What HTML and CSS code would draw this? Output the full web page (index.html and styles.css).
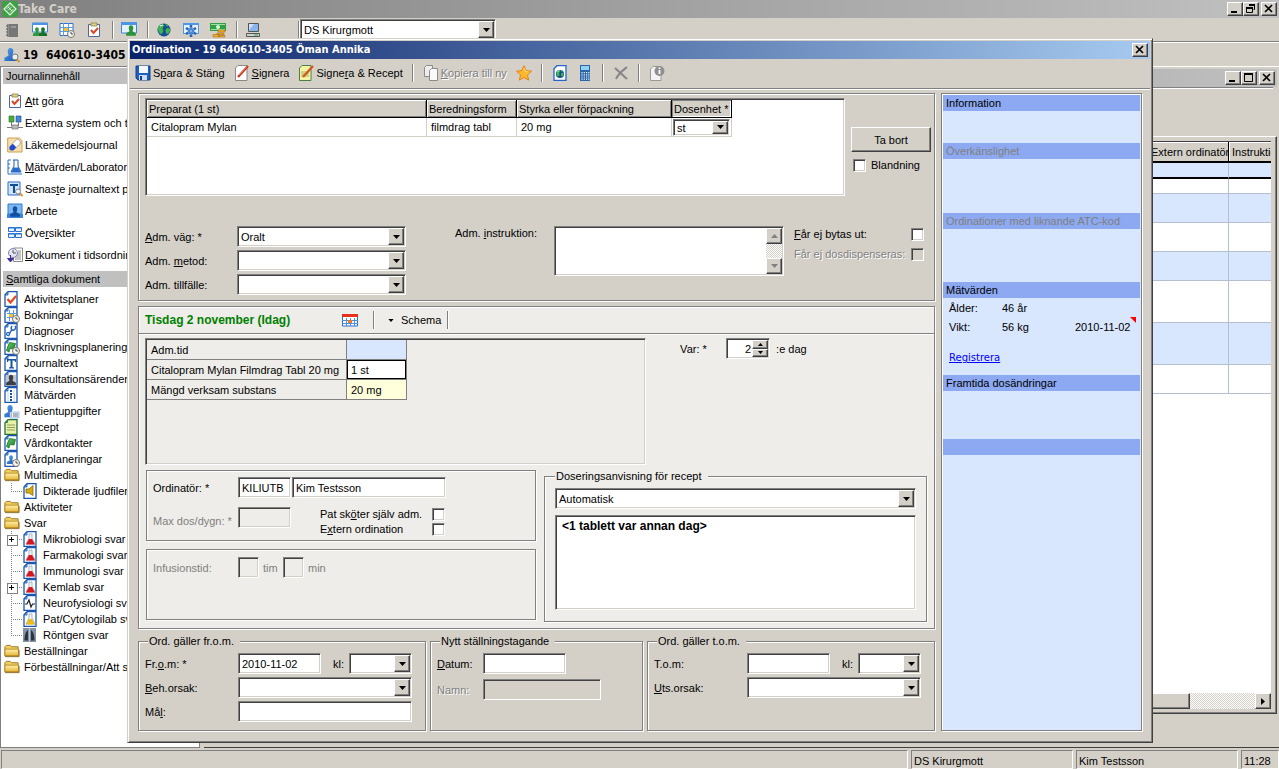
FILE: index.html
```html
<!DOCTYPE html>
<html lang="sv">
<head>
<meta charset="utf-8">
<title>Take Care</title>
<link rel="stylesheet" href="styles.css">
</head>
<body>
<svg class="sprite" aria-hidden="true">
  <defs>
    <linearGradient id="gold" x1="0" y1="0" x2="0" y2="1"><stop offset="0" stop-color="#fff3b0"/><stop offset="1" stop-color="#e8b434"/></linearGradient>
    <linearGradient id="sky" x1="0" y1="0" x2="1" y2="1"><stop offset="0" stop-color="#5aa4ee"/><stop offset="1" stop-color="#1554b8"/></linearGradient>
    <linearGradient id="leaf" x1="0" y1="0" x2="1" y2="1"><stop offset="0" stop-color="#6cc96a"/><stop offset="1" stop-color="#157a22"/></linearGradient>
  </defs>
  <symbol id="logo" viewBox="0 0 16 16"><rect width="16" height="16" rx="2" fill="#3f9f45"/><path d="M8 2l6 6-6 6-6-6z" fill="none" stroke="#e4f5e4" stroke-width="1.2"/><path d="M4.500 8L8 4.500M6 9.500L9.500 6M8 11.500L11.500 8M6 6l4 4" stroke="#e4f5e4" stroke-width="1" fill="none"/></symbol>
  <symbol id="person" viewBox="0 0 16 16"><path d="M8 1c2 0 3 1.500 3 3.500S10 8 10 9l4.500 2.500V15h-13v-3.500L6 9c0-1-1-2.500-1-4.500S6 1 8 1z"/></symbol>
  <symbol id="mini-clock" viewBox="0 0 8 8"><circle cx="4" cy="4" r="3.500" fill="#f4f4f0" stroke="#77746c"/><path d="M4 2v2h2" fill="none" stroke="#444" stroke-width=".9"/></symbol>
  <symbol id="page" viewBox="0 0 14 16"><path d="M4 .7h9v14.600H1V3.700z" fill="#fff" stroke="#1b56b0" stroke-width="1.300"/><path d="M1 4h3V1z" fill="#6fb0f2" stroke="#1b56b0" stroke-width=".8"/></symbol>
  <symbol id="book" viewBox="0 0 16 16"><path d="M2 2h11v13H2z" fill="#777"/><path d="M3 2v13" stroke="#a5a5a5"/><path d="M6 4h5v2H6z" fill="#999"/><path d="M1 4h2M1 7h2M1 10h2M1 13h2" stroke="#555"/></symbol>
  <symbol id="people" viewBox="0 0 16 16"><path d="M.5 1h15v9H.5z" fill="#fff" stroke="#3b85dc"/><path d="M0 1h16v2H0z" fill="#4b94e8"/><use href="#person" x="0" y="3" width="10" height="13" fill="#2f9a3c"/><use href="#person" x="6" y="3" width="10" height="13" fill="#187028"/></symbol>
  <symbol id="cal-clock" viewBox="0 0 16 16"><path d="M1 1.500h13v12H1z" fill="#fff" stroke="#2f72cc"/><path d="M4.500 1v13M9.500 1v13M1 5.500h13M1 9.500h13" stroke="#5b9be6" fill="none"/><path d="M5 6h4v3H5z" fill="#f5c22c"/><use href="#mini-clock" x="8" y="8" width="8" height="8"/></symbol>
  <symbol id="clip" viewBox="0 0 16 16"><path d="M2.500 2.500h11v12h-11z" fill="#fff" stroke="#4c66a8"/><path d="M5 1h6v3H5z" fill="#ddd28a" stroke="#8f8344" stroke-width=".8"/><path d="M5 8l2.500 3L12 6" fill="none" stroke="#d84a2a" stroke-width="2"/></symbol>
  <symbol id="person-green" viewBox="0 0 16 16"><path d="M.5 1h15v10H.5z" fill="#e6f1ff" stroke="#3b85dc"/><path d="M0 0h16v3H0z" fill="#4b94e8"/><use href="#person" x="4" y="1" width="12" height="15" fill="#2c9238"/></symbol>
  <symbol id="globe" viewBox="0 0 16 16"><circle cx="8" cy="8" r="6.500" fill="#164f94"/><path d="M4 3c3-2 5 0 4 1S6 7 7 8s-1 4-2 4S2 9 2 7s1-3 2-4zM10 7c2-2 4-1 4 1s-2 4-3 4-2-4-1-5zM9 2l3 1-1 2z" fill="#42b64b"/><path d="M4 4l3-1" stroke="#dff" /></symbol>
  <symbol id="snow" viewBox="0 0 16 16"><path d="M0 1h16v11H0z" fill="#4f95e8"/><path d="M1 3h14v8H1z" fill="#e7f2ff"/><path d="M8 3v12M3 6l10 6M13 6L3 12" stroke="#2465b8" stroke-width="2.600"/><path d="M8 5v8M5 7l6 4M11 7l-6 4" stroke="#8ec2fa" stroke-width=".8"/></symbol>
  <symbol id="money" viewBox="0 0 16 16"><path d="M0 1h16v8H0z" fill="#2fa045"/><path d="M1 2h14v1H1zM1 7h14v1H1z" fill="#9be0a0"/><circle cx="8" cy="5" r="2" fill="#d8f6d8"/><path d="M8 8h7v2H8zM7 11h7v1.500H7zM3 12.500h6V15H3zM9 13.500h6V15H9z" fill="#f1b428" stroke="#a8660f" stroke-width=".6"/></symbol>
  <symbol id="pc" viewBox="0 0 16 16"><path d="M3.500 1.500h10v8h-10z" fill="#8ab4ec" stroke="#555"/><path d="M4 2h5L4 8z" fill="#cfe2fb"/><path d="M1.500 11.500h13v3h-13z" fill="#d0d0cc" stroke="#555"/><path d="M9 13h4" stroke="#2a6"/></symbol>
  <symbol id="user-search" viewBox="0 0 16 16"><use href="#person" x="-1" y="0" width="15" height="15" fill="url(#sky)"/><circle cx="11" cy="10" r="3" fill="#e4f2ff" stroke="#777"/><path d="M13 12.500l2.500 2.500" stroke="#d89628" stroke-width="1.800"/></symbol>
  <symbol id="external" viewBox="0 0 16 16"><path d="M2 1h5v6H2z" fill="#4aac3c" stroke="#22701e" stroke-width=".6"/><path d="M9 1h5v6H9z" fill="#4b88dc" stroke="#1a448c" stroke-width=".6"/><path d="M4.500 7v4M11.500 7v4M0 12.500h16" stroke="#777" fill="none"/><path d="M5 10h6v4H5z" fill="#bbb" stroke="#666" stroke-width=".6"/></symbol>
  <symbol id="pill" viewBox="0 0 16 16"><path d="M.7 1h11.600L15 3.700V15H.7z" fill="#f6deae" stroke="#caa050"/><path d="M5 11L10.500 5.500" stroke="#8a8a9a" stroke-width="6" stroke-linecap="round"/><path d="M5 11L10.500 5.500" stroke="#fff" stroke-width="5" stroke-linecap="round"/><path d="M5 11L7.500 8.500" stroke="#1e49c8" stroke-width="5"/><circle cx="5" cy="11" r="2.500" fill="#1e49c8"/></symbol>
  <symbol id="flask-rule" viewBox="0 0 16 16"><path d="M1 1h3M1 1v14h14M1 5h2M1 9h2" stroke="#2a6ccc" fill="none"/><path d="M6 1h5M7 1v6l-3 6h10l-3-6V1" fill="#fff" stroke="#1d5cb4"/><path d="M6.500 8.500h5l2 4.500h-9z" fill="#246ccc"/></symbol>
  <symbol id="text-search" viewBox="0 0 16 16"><path d="M1 1h12v13H1z" fill="#cfe6fb" stroke="#2a6ccc"/><path d="M3 3h8v2H8v7H6V5H3z" fill="#124c94"/><circle cx="11" cy="10.500" r="2.500" fill="#eef6ff" stroke="#888"/><path d="M13 12.500l2.500 2.500" stroke="#d89628" stroke-width="2"/></symbol>
  <symbol id="work" viewBox="0 0 16 16"><path d="M1 1h14v10H1z" fill="#7db7f3" stroke="#2f78cf"/><path d="M0 11h16v4H0z" fill="#3c86de"/><use href="#person" x="2" y="1" width="12" height="15" fill="#124f9e"/></symbol>
  <symbol id="tiles" viewBox="0 0 16 16"><path d="M1.500 2.500h6v4h-6zM8.500 2.500h6v4h-6zM1.500 8.500h6v4h-6zM8.500 8.500h6v4h-6z" fill="#eaf4ff" stroke="#2a73cf"/><path d="M1 3h13M1 9h13" stroke="#2a73cf"/></symbol>
  <symbol id="time-doc" viewBox="0 0 16 16"><path d="M6.500 1h9v13.500h-9z" fill="#fff" stroke="#888"/><path d="M11 4h3M11 6h3M10 8h4M8 10h6M8 12h6" stroke="#888"/><circle cx="6" cy="6" r="4.500" fill="#e2e5f2" stroke="#8585a8"/><path d="M6 3v3h3" stroke="#555" fill="none"/><path d="M3.500 8v4M.5 11.500L3.500 15l3-3.500z" fill="#3b2f9e" stroke="#3b2f9e"/></symbol>
  <symbol id="d-check" viewBox="0 0 16 16"><use href="#page" width="14" height="16"/><path d="M3.500 8l3 3.500L12 5" stroke="#e04a20" stroke-width="2.200" fill="none"/></symbol>
  <symbol id="d-cal" viewBox="0 0 16 16"><use href="#page" width="14" height="16"/><path d="M5.500 3v11M9.500 3v11M3 6.500h10M3 10.500h8" stroke="#5b9be6" fill="none"/><path d="M5 7h4v3H5z" fill="#f5c22c"/><use href="#mini-clock" x="8" y="8" width="8" height="8"/></symbol>
  <symbol id="d-steth" viewBox="0 0 16 16"><use href="#page" width="14" height="16"/><path d="M8 3c-2 3 0 5 2 4s2-3 1-4M8 7c-2 1-2 4-4 6" stroke="#2765bd" stroke-width="1.500" fill="none"/><circle cx="4" cy="11" r="1.700" fill="#9cc8f4" stroke="#2765bd"/></symbol>
  <symbol id="d-green" viewBox="0 0 16 16"><use href="#page" width="14" height="16"/><path d="M5.500 3.500l6 1-1.500 5.500-4-.5L5 13l-2.500-1.500L4 7z" fill="url(#leaf)" stroke="#157a22" stroke-width=".8"/></symbol>
  <symbol id="d-green-clock" viewBox="0 0 16 16"><use href="#d-green" width="16" height="16"/><use href="#mini-clock" x="8" y="8" width="8" height="8"/></symbol>
  <symbol id="d-text" viewBox="0 0 16 16"><use href="#page" width="14" height="16"/><path d="M3 4h9v3h-1l-.5-1.500H8.500V12l1.500.5v1H5v-1l1.500-.5V5.500H4.500L4 7H3z" fill="#17569c"/></symbol>
  <symbol id="d-consult" viewBox="0 0 16 16"><use href="#page" width="14" height="16"/><path d="M2 4h10v11H2z" fill="#c3c8d0"/><use href="#person" x="1" y="3" width="12" height="12" fill="#3a3f48"/></symbol>
  <symbol id="d-measure" viewBox="0 0 16 16"><use href="#page" width="14" height="16"/><path d="M4 5v9M10 3v11" stroke="#b7d6f7"/><path d="M7 3v12" stroke="#1d4f9c" stroke-width="2" stroke-dasharray="2 1"/></symbol>
  <symbol id="d-patient" viewBox="0 0 16 16"><use href="#person" x="-1" y="0" width="14" height="16" fill="url(#sky)"/><path d="M6 9h9v6H6z" fill="#eef5ff" stroke="#7aa8dc" stroke-width=".7"/><path d="M7 11h1M9 11h5M7 13h1M9 13h5" stroke="#777"/></symbol>
  <symbol id="d-recept" viewBox="0 0 16 16"><path d="M4 .7h9v14.600H1V3.700z" fill="#e9f0a8" stroke="#22703a" stroke-width="1.300"/><path d="M3 6h8M3 8.500h8M3 11h8" stroke="#8ea05c"/><path d="M1 4h3V1z" fill="#3f8d4a"/></symbol>
  <symbol id="d-plan" viewBox="0 0 16 16"><use href="#page" width="14" height="16"/><use href="#person" x="2" y="2" width="10" height="13" fill="url(#sky)"/><use href="#mini-clock" x="8" y="8" width="8" height="8"/></symbol>
  <symbol id="folder" viewBox="0 0 17 16"><path d="M1 3.500L2.500 2h4L8 3.500h7V13H1z" fill="#f3cf62" stroke="#9a741c"/><path d="M1 13V6h14.500v7z" fill="url(#gold)" stroke="#b88a22"/><path d="M1 14h15V7" stroke="#8a6a22" fill="none"/></symbol>
  <symbol id="d-sound" viewBox="0 0 14 16"><use href="#page" width="14" height="16"/><path d="M3 6h3l4-3.500v10L6 10H3z" fill="#d4ad12" stroke="#8a6d00" stroke-width=".8"/></symbol>
  <symbol id="d-red" viewBox="0 0 14 16"><use href="#page" width="14" height="16"/><path d="M6 3h3v4l3 6H3l3-6z" fill="#eef4fb" stroke="#8a9ab0" stroke-width=".7"/><path d="M6 8h3l3 5.500H3z" fill="#d8171c"/></symbol>
  <symbol id="d-yellow" viewBox="0 0 14 16"><use href="#page" width="14" height="16"/><path d="M6 3h3v4l3 6H3l3-6z" fill="#eef4fb" stroke="#8a9ab0" stroke-width=".7"/><path d="M6 8h3l3 5.500H3z" fill="#eebc10"/></symbol>
  <symbol id="d-pulse" viewBox="0 0 14 16"><use href="#page" width="14" height="16"/><path d="M2 9h2l2-4 2 7 1.500-3H12" fill="none" stroke="#222" stroke-width="1.200"/></symbol>
  <symbol id="d-xray" viewBox="0 0 14 16"><path d="M0 1h13v14H0z" fill="#8494a4"/><path d="M5 3c-3 2-3.500 7-3.500 10.500H5zM8 3c3 2 3.500 7 3.500 10.500H8z" fill="#2a3440"/><path d="M6.500 1v14" stroke="#b9c7d4"/></symbol>
  <symbol id="save" viewBox="0 0 16 16"><path d="M1 1h14v14H3l-2-2z" fill="#1f5ec2" stroke="#123f8e"/><path d="M4 1h9v7H4z" fill="#f2f6fc"/><path d="M4 10h8v5H4z" fill="#cddcf0"/><path d="M5 11h2v4H5z" fill="#123f8e"/></symbol>
  <symbol id="sign" viewBox="0 0 16 16"><path d="M4 .5h9v15H1.500V3z" fill="#fff" stroke="#888"/><path d="M4 12L14 1" stroke="#c9321c" stroke-width="2.200"/><path d="M5 10L13 1.500" stroke="#f58a70" stroke-width=".8"/></symbol>
  <symbol id="sign-recept" viewBox="0 0 16 16"><path d="M4 .5h9v15H1.500V3z" fill="#f2f5a6" stroke="#4a8044"/><path d="M3 7h8M3 9h8M3 11h8" stroke="#a5ae68"/><path d="M5 12L15 1" stroke="#d4541c" stroke-width="2.200"/></symbol>
  <symbol id="copy" viewBox="0 0 16 16"><path d="M3.500.5h6v11h-8v-9z" fill="#eee" stroke="#8b8b8b"/><path d="M8.500 3.500h6v12h-8v-10z" fill="#fafafa" stroke="#8b8b8b"/></symbol>
  <symbol id="star" viewBox="0 0 16 16"><path d="M8 .8l2.200 4.800 5.300.6-4 3.600 1.100 5.400L8 12.500l-4.600 2.700 1.100-5.400-4-3.600 5.300-.6z" fill="#ffb82c" stroke="#e08416"/><path d="M8 3l1.500 3.500 3 .5" stroke="#ffe48c" fill="none"/></symbol>
  <symbol id="web-doc" viewBox="0 0 16 16"><path d="M5 .7h9v14.600H2V3.700z" fill="#fff" stroke="#2467cc" stroke-width="1.300"/><use href="#globe" x="3" y="4" width="10" height="10"/></symbol>
  <symbol id="calc" viewBox="0 0 16 16"><path d="M3 0h10v16H3z" fill="#2b66a8"/><path d="M4 1h8v4H4z" fill="#8fd0f4"/><path d="M5 7v8M7.300 7v8M9.600 7v8M11.800 7v8" stroke="#e8f4ff" stroke-width="1.200" stroke-dasharray="1.200 1"/></symbol>
  <symbol id="cross" viewBox="0 0 16 16"><path d="M2 3l12 11M14 2C9 6 5 9 3 14" stroke="#858585" stroke-width="2" fill="none"/></symbol>
  <symbol id="info-doc" viewBox="0 0 16 16"><path d="M4 1.500h8v14H1.500V4z" fill="#f3f3f3" stroke="#999"/><circle cx="10.500" cy="6" r="5" fill="#8f8f8f"/><path d="M10.500 2.500v1.500M10.500 5v4" stroke="#fff" stroke-width="1.800"/></symbol>
  <symbol id="calendar" viewBox="0 0 16 13"><path d="M.5 1h15v11H.5z" fill="#fff" stroke="#2b6fcc"/><path d="M0 0h16v3H0z" fill="#e8301c"/><path d="M4.500 4v8M8.500 4v8M12.500 4v8M0 6.500h16M0 9.500h16" stroke="#4c8ee0" fill="none"/><path d="M6 6h4v3H6z" fill="#ee7b24"/></symbol>
  <symbol id="down" viewBox="0 0 7 4"><path d="M0 0h7L3.500 4z"/></symbol>
  <symbol id="up" viewBox="0 0 7 4"><path d="M0 4h7L3.500 0z"/></symbol>
  <symbol id="right" viewBox="0 0 4 7"><path d="M0 0v7l4-3.500z"/></symbol>
  <symbol id="w-min" viewBox="0 0 10 10"><path d="M1 7h6v2H1z"/></symbol>
  <symbol id="w-max" viewBox="0 0 10 10"><path d="M.5 1.500h8v7h-8z" fill="none" stroke="#000"/><path d="M0 0h9v2H0z"/></symbol>
  <symbol id="w-restore" viewBox="0 0 10 10"><path d="M3.500 1.500h5v4h-1M.5 4.500h6v4h-6z" fill="none" stroke="#000"/><path d="M3 0h6v2H3zM0 3h7v2H0z"/></symbol>
  <symbol id="w-close" viewBox="0 0 10 10"><path d="M1 1l7 7M8 1L1 8" stroke="#000" stroke-width="1.700"/></symbol>
</svg>

<div class="app">
  <header class="titlebar titlebar-app">
    <svg class="i16"><use href="#logo"/></svg>
    <span class="caption">Take Care</span>
    <button class="winbtn" aria-label="Minimera"><svg><use href="#w-min"/></svg></button>
    <button class="winbtn" aria-label="Återställ"><svg><use href="#w-restore"/></svg></button>
    <button class="winbtn winbtn-close" aria-label="Stäng"><svg><use href="#w-close"/></svg></button>
  </header>

  <div class="app-tools">
    <button class="icon-tool" aria-label="Journal"><svg class="i16"><use href="#book"/></svg></button>
    <button class="icon-tool" aria-label="Patienter"><svg class="i16"><use href="#people"/></svg></button>
    <button class="icon-tool" aria-label="Bokning"><svg class="i16"><use href="#cal-clock"/></svg></button>
    <button class="icon-tool" aria-label="Att göra"><svg class="i16"><use href="#clip"/></svg></button>
    <i class="sep"></i>
    <button class="icon-tool" aria-label="Patient"><svg class="i16"><use href="#person-green"/></svg></button>
    <i class="sep"></i>
    <button class="icon-tool" aria-label="Webb"><svg class="i16"><use href="#globe"/></svg></button>
    <button class="icon-tool" aria-label="Akut"><svg class="i16"><use href="#snow"/></svg></button>
    <button class="icon-tool" aria-label="Kassa"><svg class="i16"><use href="#money"/></svg></button>
    <i class="sep"></i>
    <button class="icon-tool" aria-label="Dator"><svg class="i16"><use href="#pc"/></svg></button>
    <i class="sep sep-far"></i>
    <span class="combo combo-unit"><select aria-label="Enhet"><option>DS Kirurgmott</option></select><span class="drop"><svg class="tri"><use href="#down"/></svg></span></span>
  </div>

  <div class="patient"><svg class="i16"><use href="#user-search"/></svg><span>19</span><span>640610-3405 Öman Annika</span></div>

  <div class="work-area">
    <nav class="sidebar">
      <h2>Journalinnehåll</h2>
      <ul class="links">
        <li><svg class="i16"><use href="#clip"/></svg><a href="#"><u>A</u>tt göra</a></li>
        <li><svg class="i16"><use href="#external"/></svg><a href="#">Externa system och tjänster</a></li>
        <li><svg class="i16"><use href="#pill"/></svg><a href="#">Läkemedels<u>j</u>ournal</a></li>
        <li><svg class="i16"><use href="#flask-rule"/></svg><a href="#"><u>M</u>ätvärden/Laboratorium</a></li>
        <li><svg class="i16"><use href="#text-search"/></svg><a href="#">Senas<u>t</u>e journaltext per</a></li>
        <li><svg class="i16"><use href="#work"/></svg><a href="#">Arbete</a></li>
        <li><svg class="i16"><use href="#tiles"/></svg><a href="#">Öve<u>r</u>sikter</a></li>
        <li><svg class="i16"><use href="#time-doc"/></svg><a href="#"><u>D</u>okument i tidsordning</a></li>
      </ul>
      <h2><u>S</u>amtliga dokument</h2>
      <ul class="tree">
        <li><svg class="i16"><use href="#d-check"/></svg>Aktivitetsplaner</li>
        <li><svg class="i16"><use href="#d-cal"/></svg>Bokningar</li>
        <li><svg class="i16"><use href="#d-steth"/></svg>Diagnoser</li>
        <li><svg class="i16"><use href="#d-green-clock"/></svg>Inskrivningsplaneringar</li>
        <li><svg class="i16"><use href="#d-text"/></svg>Journaltext</li>
        <li><svg class="i16"><use href="#d-consult"/></svg>Konsultationsärenden</li>
        <li><svg class="i16"><use href="#d-measure"/></svg>Mätvärden</li>
        <li><svg class="i16"><use href="#d-patient"/></svg>Patientuppgifter</li>
        <li><svg class="i16"><use href="#d-recept"/></svg>Recept</li>
        <li><svg class="i16"><use href="#d-green"/></svg>Vårdkontakter</li>
        <li><svg class="i16"><use href="#d-plan"/></svg>Vårdplaneringar</li>
        <li><svg class="i16"><use href="#folder"/></svg>Multimedia</li>
        <li class="sub last"><i class="twig"></i><svg class="i14"><use href="#d-sound"/></svg>Dikterade ljudfiler</li>
        <li><svg class="i16"><use href="#folder"/></svg>Aktiviteter</li>
        <li><svg class="i16"><use href="#folder"/></svg>Svar</li>
        <li class="sub plus"><i class="twig"></i><svg class="i14"><use href="#d-red"/></svg>Mikrobiologi svar</li>
        <li class="sub"><i class="twig"></i><svg class="i14"><use href="#d-red"/></svg>Farmakologi svar</li>
        <li class="sub"><i class="twig"></i><svg class="i14"><use href="#d-red"/></svg>Immunologi svar</li>
        <li class="sub plus"><i class="twig"></i><svg class="i14"><use href="#d-red"/></svg>Kemlab svar</li>
        <li class="sub"><i class="twig"></i><svg class="i14"><use href="#d-pulse"/></svg>Neurofysiologi svar</li>
        <li class="sub"><i class="twig"></i><svg class="i14"><use href="#d-yellow"/></svg>Pat/Cytologilab svar</li>
        <li class="sub last"><i class="twig"></i><svg class="i14"><use href="#d-xray"/></svg>Röntgen svar</li>
        <li><svg class="i16"><use href="#folder"/></svg>Beställningar</li>
        <li><svg class="i16"><use href="#folder"/></svg>Förbeställningar/Att skriva</li>
      </ul>
    </nav>

    <main class="child">
      <div class="titlebar titlebar-child">
        <span class="caption"></span>
        <button class="winbtn" aria-label="Minimera"><svg><use href="#w-min"/></svg></button>
        <button class="winbtn" aria-label="Maximera"><svg><use href="#w-max"/></svg></button>
        <button class="winbtn winbtn-close" aria-label="Stäng"><svg><use href="#w-close"/></svg></button>
      </div>
      <div class="child-rule"></div>
      <div class="list-frame">
        <div class="list-scroll">
          <table class="list">
            <colgroup><col><col class="c-extern"><col class="c-instr"></colgroup>
            <thead><tr><th></th><th>Extern ordinatör</th><th>Instruktion</th></tr></thead>
            <tbody>
              <tr class="current"><td></td><td></td><td></td></tr>
              <tr class="r15"><td></td><td></td><td></td></tr>
              <tr class="r29 alt"><td></td><td></td><td></td></tr>
              <tr class="r29"><td></td><td></td><td></td></tr>
              <tr class="r29 alt"><td></td><td></td><td></td></tr>
              <tr class="r42"><td></td><td></td><td></td></tr>
              <tr class="r42 alt"><td></td><td></td><td></td></tr>
              <tr class="r29"><td></td><td></td><td></td></tr>
            </tbody>
          </table>
        </div>
        <div class="hscroll"><span class="thumb"></span><button class="scrollbtn" aria-label="Rulla åt höger"><svg class="tri-r"><use href="#right"/></svg></button></div>
      </div>
    </main>
  </div>

  <footer class="status"><span class="st-main"></span><span class="st-cell">DS Kirurgmott</span><span class="st-cell">Kim Testsson</span><span class="st-time">11:28</span></footer>
</div>

<section class="dialog" role="dialog" aria-labelledby="dlg-title">
  <header class="titlebar titlebar-dialog">
    <span class="caption" id="dlg-title">Ordination - 19 640610-3405 Öman Annika</span>
    <button class="winbtn winbtn-close" aria-label="Stäng"><svg><use href="#w-close"/></svg></button>
  </header>

  <div class="dlg-tools">
    <button class="tool t-save"><svg class="i16"><use href="#save"/></svg><span>S<u>p</u>ara &amp; Stäng</span></button>
    <button class="tool t-sign"><svg class="i16"><use href="#sign"/></svg><span><u>S</u>ignera</span></button>
    <button class="tool t-recept"><svg class="i16"><use href="#sign-recept"/></svg><span>Signe<u>r</u>a &amp; Recept</span></button>
    <i class="sep"></i>
    <button class="tool t-copy" disabled><svg class="i16"><use href="#copy"/></svg><span><u>K</u>opiera till ny</span></button>
    <button class="tool" aria-label="Favorit"><svg class="i16"><use href="#star"/></svg></button>
    <i class="sep"></i>
    <button class="tool" aria-label="Webbinformation"><svg class="i16"><use href="#web-doc"/></svg></button>
    <button class="tool" aria-label="Kalkylator"><svg class="i16"><use href="#calc"/></svg></button>
    <i class="sep"></i>
    <button class="tool" disabled aria-label="Ta bort"><svg class="i16"><use href="#cross"/></svg></button>
    <i class="sep"></i>
    <button class="tool" disabled aria-label="Information"><svg class="i16"><use href="#info-doc"/></svg></button>
  </div>

  <div class="dlg-body">
    <div class="dlg-left">
      <div class="panel drug">
        <div class="drug-top">
          <div class="sunken drug-list">
            <table class="drugs">
              <colgroup><col class="c-prep"><col class="c-form"><col class="c-size"><col class="c-unit"></colgroup>
              <thead><tr><th>Preparat (1 st)</th><th>Beredningsform</th><th>Styrka eller förpackning</th><th class="pressed">Dosenhet *</th></tr></thead>
              <tbody><tr><td>Citalopram Mylan</td><td>filmdrag tabl</td><td>20 mg</td><td class="cell-combo"><span class="combo combo-cell"><select aria-label="Dosenhet"><option>st</option></select><span class="drop"><svg class="tri"><use href="#down"/></svg></span></span></td></tr></tbody>
            </table>
          </div>
          <div class="drug-side">
            <button class="push">Ta bort</button>
            <label class="check"><input type="checkbox">Blandning</label>
          </div>
        </div>
        <div class="drug-form">
          <div class="adm">
            <label for="vag"><u>A</u>dm. väg: *</label>
            <span class="combo"><select id="vag"><option>Oralt</option></select><span class="drop"><svg class="tri"><use href="#down"/></svg></span></span>
            <label for="metod">Adm. <u>m</u>etod:</label>
            <span class="combo"><select id="metod"><option></option></select><span class="drop"><svg class="tri"><use href="#down"/></svg></span></span>
            <label for="tillf">Adm. tillfälle:</label>
            <span class="combo"><select id="tillf"><option></option></select><span class="drop"><svg class="tri"><use href="#down"/></svg></span></span>
          </div>
          <label class="instr-label" for="instr">Adm. <u>i</u>nstruktion:</label>
          <div class="sunken instr">
            <textarea id="instr"></textarea>
            <div class="vscroll"><button class="scrollbtn" aria-label="Upp"><svg class="tri"><use href="#up"/></svg></button><button class="scrollbtn" aria-label="Ned"><svg class="tri"><use href="#down"/></svg></button></div>
          </div>
          <div class="flags">
            <label for="byt"><u>F</u>år ej bytas ut:</label><input id="byt" type="checkbox">
            <label for="dos" class="off">Får ej dosdispenseras:</label><input id="dos" type="checkbox" disabled>
          </div>
        </div>
      </div>

      <div class="panel dose">
        <div class="dose-head">
          <h3>Tisdag 2 november (Idag)</h3>
          <button class="tool" aria-label="Kalender"><svg class="cal"><use href="#calendar"/></svg></button>
          <i class="sep"></i>
          <button class="tool schema"><svg class="tri-s"><use href="#down"/></svg><span>Schema</span></button>
          <i class="sep"></i>
        </div>
        <div class="dose-main">
          <div class="sunken dose-list">
            <table class="doses">
              <tbody>
                <tr><th>Adm.tid</th><td class="time"></td></tr>
                <tr><th>Citalopram Mylan Filmdrag Tabl 20 mg</th><td class="focus">1 st</td></tr>
                <tr><th>Mängd verksam substans</th><td class="sum">20 mg</td></tr>
              </tbody>
            </table>
          </div>
          <div class="every">
            <label for="var">Var: *</label>
            <span class="sunken spin"><input id="var" type="text" value="2"><span class="spin-btns"><button aria-label="Öka"><svg><use href="#up"/></svg></button><button aria-label="Minska"><svg><use href="#down"/></svg></button></span></span>
            <span>:e dag</span>
          </div>
        </div>
        <div class="dose-foot">
          <div class="foot-left">
            <div class="panel orderer">
              <label for="ord">Ordinatör: *</label>
              <div class="names"><input class="field w-code" id="ord" type="text" value="KILIUTB"><input class="field w-name" type="text" value="Kim Testsson" aria-label="Ordinatörens namn"></div>
              <label for="max" class="grey">Max dos/dygn: *</label>
              <div class="max-row">
                <input class="field w-code" id="max" type="text" disabled>
                <div class="opts">
                  <label for="sjalv">Pat sk<u>ö</u>ter själv adm.</label><input id="sjalv" type="checkbox">
                  <label for="extern">E<u>x</u>tern ordination</label><input id="extern" type="checkbox">
                </div>
              </div>
            </div>
            <div class="panel infusion">
              <label for="tim" class="grey">Infusionstid:</label>
              <input class="field w-tiny" id="tim" type="text" disabled><span class="grey">tim</span>
              <input class="field w-tiny" type="text" disabled aria-label="Minuter"><span class="grey">min</span>
            </div>
          </div>
          <fieldset class="advice">
            <legend>Doseringsanvisning för recept</legend>
            <span class="combo"><select aria-label="Typ av anvisning"><option>Automatisk</option></select><span class="drop"><svg class="tri"><use href="#down"/></svg></span></span>
            <textarea class="field advice-text" aria-label="Doseringsanvisning">&lt;1 tablett var annan dag&gt;</textarea>
          </fieldset>
        </div>
      </div>

      <div class="periods">
        <fieldset class="period">
          <legend>Ord. gäller fr.o.m.</legend>
          <label for="from">Fr.<u>o</u>.m: *</label>
          <div class="date-row"><input class="field w-date" id="from" type="text" value="2010-11-02"><label for="fromkl">kl:</label><span class="combo w-time"><select id="fromkl"><option></option></select><span class="drop"><svg class="tri"><use href="#down"/></svg></span></span></div>
          <label for="beh"><u>B</u>eh.orsak:</label>
          <span class="combo"><select id="beh"><option></option></select><span class="drop"><svg class="tri"><use href="#down"/></svg></span></span>
          <label for="mal">Må<u>l</u>:</label>
          <input class="field" id="mal" type="text">
        </fieldset>
        <fieldset class="period period-mid">
          <legend>Nytt ställningstagande</legend>
          <label for="datum"><u>D</u>atum:</label>
          <input class="field w-date" id="datum" type="text">
          <label for="namn" class="off">Namn:</label>
          <input class="field w-sign" id="namn" type="text" disabled>
        </fieldset>
        <fieldset class="period">
          <legend>Ord. gäller t.o.m.</legend>
          <label for="tom">T.o.m:</label>
          <div class="date-row"><input class="field w-date" id="tom" type="text"><label for="tomkl">kl:</label><span class="combo w-time"><select id="tomkl"><option></option></select><span class="drop"><svg class="tri"><use href="#down"/></svg></span></span></div>
          <label for="uts"><u>U</u>ts.orsak:</label>
          <span class="combo"><select id="uts"><option></option></select><span class="drop"><svg class="tri"><use href="#down"/></svg></span></span>
        </fieldset>
      </div>
    </div>

    <aside class="info">
      <h4>Information</h4>
      <div class="info-gap g32"></div>
      <h4 class="dim">Överkänslighet</h4>
      <div class="info-gap g54"></div>
      <h4 class="dim">Ordinationer med liknande ATC-kod</h4>
      <div class="info-gap g53"></div>
      <h4>Mätvärden</h4>
      <div class="measures">
        <span>Ålder:</span><span>46 år</span><span></span>
        <span>Vikt:</span><span>56 kg</span><span class="flagged">2010-11-02<svg viewBox="0 0 6 6"><path d="M0 0h6v6z" fill="#f00"/></svg></span>
        <a href="#">Registrera</a>
      </div>
      <h4>Framtida dosändringar</h4>
      <div class="info-gap g48"></div>
      <h4></h4>
    </aside>
  </div>
</section>
</body>
</html>
```
FILE: styles.css
```css
:root {
  --face: #d4d0c8;
  --light: #eeede9;
  --shade: #808080;
  --dark: #404040;
  --sky: #d8e6fe;
  --bar: #8ca9f1;
}

* { box-sizing: border-box; }

body {
  margin: 0;
  height: 100vh;
  overflow: hidden;
  background: var(--face);
  color: #000;
  font: 11px/14px "Liberation Sans", Arial, sans-serif;
  white-space: nowrap;
}

button, input, select, textarea {
  margin: 0;
  padding: 0;
  border: 0;
  border-radius: 0;
  background: none;
  color: inherit;
  font: inherit;
  outline: 0;
}

h2, h3, h4, ul { margin: 0; padding: 0; font: inherit; list-style: none; }
a { color: inherit; text-decoration: none; }
svg { display: block; flex: none; }
.sprite { position: absolute; width: 0; height: 0; }
.i16 { width: 16px; height: 16px; }
.i14 { width: 14px; height: 16px; }
.tri { width: 7px; height: 4px; }
.tri-s { width: 6px; height: 3px; }
.tri-r { width: 4px; height: 7px; }
.cal { width: 16px; height: 13px; }

.grey { color: var(--shade); }
.off { color: var(--shade); text-shadow: 1px 1px #fff; }

.sunken, .field, .combo, input[type="checkbox"] {
  border: 1px solid;
  border-color: var(--shade) #fff #fff var(--shade);
  box-shadow: inset 1px 1px var(--dark), inset -1px -1px var(--face);
  background: #fff;
}
.sunken { padding: 1px; }
.field { height: 21px; width: 100%; padding: 0 3px; resize: none; }
.field:disabled { background: transparent; }
input[type="checkbox"] { appearance: none; display: block; width: 13px; height: 13px; }
input[type="checkbox"]:disabled { background: var(--face); }

.combo { display: flex; height: 21px; padding: 1px; }
.combo select { flex: 1; min-width: 0; padding: 0 2px; appearance: none; }
.drop, .scrollbtn, .winbtn, .push, .thumb, .spin-btns button {
  display: flex;
  align-items: center;
  justify-content: center;
  border: 1px solid;
  border-color: #fff var(--dark) var(--dark) #fff;
  box-shadow: inset -1px -1px var(--shade);
  background: var(--face);
}
.drop { flex: none; width: 16px; }
.scrollbtn { width: 16px; height: 16px; }

.sep { width: 2px; height: 18px; border-left: 1px solid var(--shade); background: #fff; }

.titlebar { display: flex; flex: none; align-items: center; height: 18px; padding: 0 2px; }
.caption { flex: 1; font: bold 11px/14px "DejaVu Sans Condensed", "DejaVu Sans", sans-serif; }
.winbtn { width: 16px; height: 14px; }
.winbtn svg { width: 10px; height: 10px; }
.winbtn-close { margin-left: 2px; }
.titlebar-app { background: linear-gradient(90deg, #808080, #c0c0c0); color: var(--face); }
.titlebar-app .caption { font-size: 12px; }
.titlebar-dialog { background: linear-gradient(90deg, #0a246a, #a6caf0); color: #fff; }

.app { display: flex; flex-direction: column; height: 100%; }
.app-tools {
  display: flex;
  flex: none;
  align-items: center;
  height: 24px;
  padding-left: 5px;
  gap: 10px;
  border-bottom: 1px solid var(--shade);
}
.app-tools .sep { margin: 0 -3px 0 -1px; }
.app-tools .sep-far { margin: 0 0 0 26px; }
.app-tools .combo-unit { width: 196px; margin-left: -10px; }
.icon-tool { width: 17px; height: 16px; }

.patient {
  display: flex;
  flex: none;
  align-items: center;
  height: 24px;
  padding-left: 4px;
  border-top: 1px solid #fff;
  font: bold 12px/14px "DejaVu Sans Condensed", "DejaVu Sans", sans-serif;
}
.patient span { margin-left: 3px; }
.patient span + span { margin-left: 8px; }

.work-area { display: flex; flex: 1; min-height: 0; gap: 4px; }
.sidebar {
  flex: none;
  width: 200px;
  padding: 1px 1px 0 2px;
  overflow: hidden;
  border: 1px solid var(--shade);
  background: #fff;
}
.sidebar h2 { height: 16px; padding: 1px 3px; background: #c0c0c0; }
.links { padding: 6px 0 5px 4px; }
.links li { display: flex; align-items: center; height: 22px; gap: 2px; }
.tree { padding: 4px 0 0 1px; }
.tree li { display: flex; align-items: center; height: 16px; gap: 4px; }
.tree .sub { gap: 0; padding-left: 7px; }
.tree .i14 { margin-right: 6px; }
.twig {
  align-self: stretch;
  flex: none;
  width: 12px;
  background:
    repeating-linear-gradient(90deg, var(--shade) 0 1px, transparent 1px 2px) 0 8px / 12px 1px no-repeat,
    repeating-linear-gradient(var(--shade) 0 1px, transparent 1px 2px) 0 0 / 1px 16px no-repeat;
}
.last .twig {
  background:
    repeating-linear-gradient(90deg, var(--shade) 0 1px, transparent 1px 2px) 0 8px / 12px 1px no-repeat,
    repeating-linear-gradient(var(--shade) 0 1px, transparent 1px 2px) 0 0 / 1px 9px no-repeat;
}
.plus { position: relative; }
.plus::before {
  content: "";
  position: absolute;
  left: 3px;
  top: 4px;
  width: 9px;
  height: 9px;
  border: 1px solid var(--shade);
  background:
    linear-gradient(#000, #000) 1px 3px / 5px 1px no-repeat,
    linear-gradient(#000, #000) 3px 1px / 1px 5px no-repeat,
    #fff;
}

.child {
  display: flex;
  flex: 1;
  flex-direction: column;
  min-width: 0;
  padding: 2px 2px 33px 2px;
  border-top: 1px solid #fff;
  border-bottom: 1px solid var(--dark);
}
.titlebar-child { background: linear-gradient(90deg, #808080, #c0c0c0); }
.child-rule { flex: none; height: 49px; margin-right: 4px; border-top: 1px solid var(--shade); box-shadow: inset 0 1px #fff; }
.list-frame {
  display: flex;
  flex: 1;
  flex-direction: column;
  min-height: 0;
  padding: 4px 5px 4px 4px;
  border: 1px solid;
  border-color: #fff var(--dark) var(--dark) #fff;
  box-shadow: inset -1px -1px var(--shade);
}
.list-scroll { flex: 1; min-height: 0; overflow: hidden; border-top: 1px solid var(--dark); background: #fff; }
.list { width: 100%; table-layout: fixed; border-collapse: separate; border-spacing: 0; }
.c-extern { width: 81px; }
.c-instr { width: 42px; }
.list th {
  height: 21px;
  padding: 0 0 0 3px;
  overflow: hidden;
  border-right: 1px solid #000;
  border-bottom: 2px solid #000;
  background: var(--face);
  box-shadow: inset 1px 1px #fff;
  font-weight: normal;
  text-align: left;
}
.list td { padding: 0; border-right: 1px solid #b4bfcf; border-bottom: 1px solid #b4bfcf; }
.list th:last-child, .list td:last-child { border-right: 0; }
.list .current td { height: 16px; border-bottom: 2px solid #000; background: var(--sky); }
.list .r15 td { height: 15px; }
.list .r29 td { height: 29px; }
.list .r42 td { height: 42px; }
.list .alt td { background: var(--sky); }
.hscroll {
  display: flex;
  justify-content: space-between;
  height: 16px;
  background: repeating-conic-gradient(#fff 0 25%, var(--face) 0 50%) 0 0 / 2px 2px;
}
.thumb { flex: none; width: calc(100% - 81px); }

.status { display: flex; flex: none; height: 21px; padding: 2px 0 0 1px; gap: 3px; }
.status span { padding: 3px 2px; border: 1px solid; border-color: var(--shade) #fff #fff var(--shade); }
.status .st-main { flex: 1; }
.status .st-cell { width: 162px; }
.status .st-time { width: 38px; }

.dialog {
  position: absolute;
  inset: 38px 126px 26px 127px;
  display: flex;
  flex-direction: column;
  padding: 2px;
  border: 1px solid;
  border-color: var(--face) var(--dark) var(--dark) var(--face);
  box-shadow: inset 1px 1px #fff, inset -1px -1px var(--shade);
  background: var(--face);
}
.dlg-tools {
  display: flex;
  flex: none;
  align-items: center;
  height: 30px;
  padding: 0 0 2px 5px;
  gap: 9px;
  border-bottom: 1px solid var(--shade);
  box-shadow: 0 1px #fff;
}
.tool { display: flex; align-items: center; gap: 2px; }
.tool:disabled { color: var(--shade); text-shadow: 1px 1px #fff; }

.dlg-body { display: flex; flex: 1; min-height: 0; padding: 4px 8px 9px; gap: 6px; }
.dlg-left { display: flex; flex: 1; flex-direction: column; min-width: 0; gap: 5px; }
.panel { border: 1px solid var(--shade); box-shadow: inset 1px 1px #fff, 1px 1px #fff; }

.drug { flex: none; height: 208px; padding: 4px 3px 4px 6px; }
.drug-top { display: flex; gap: 6px; }
.drug-list { flex: 1; height: 98px; }
.drugs { table-layout: fixed; width: 585px; border-collapse: separate; border-spacing: 0; }
.c-prep { width: 280px; }
.c-form { width: 90px; }
.c-size { width: 155px; }
.c-unit { width: 60px; }
.drugs th {
  height: 18px;
  padding: 0 2px;
  border-right: 1px solid #000;
  border-bottom: 1px solid #000;
  background: var(--face);
  box-shadow: inset 1px 1px #fff, inset -1px -1px var(--shade);
  font-weight: normal;
  text-align: left;
}
.drugs .pressed { box-shadow: inset 1px 1px var(--shade), inset -1px -1px #fff; }
.drugs td { height: 19px; padding: 0 4px; border-right: 1px solid var(--face); border-bottom: 1px solid var(--face); }
.drugs .cell-combo { padding: 0 1px; }
.combo-cell { height: 17px; }
.drug-side { display: flex; flex-direction: column; width: 80px; padding-top: 29px; gap: 6px; }
.push { height: 25px; }
.check { display: flex; align-items: center; padding-left: 2px; gap: 5px; }

.drug-form { display: flex; align-items: flex-start; padding-top: 30px; }
.adm { display: grid; grid-template-columns: 92px 169px; row-gap: 3px; align-items: center; }
.instr-label { width: 99px; margin-left: 49px; }
.instr { display: flex; flex: 1; height: 50px; }
.instr textarea { flex: 1; min-width: 0; resize: none; overflow: hidden; }
.vscroll {
  display: flex;
  flex-direction: column;
  justify-content: space-between;
  background: repeating-conic-gradient(#fff 0 25%, var(--face) 0 50%) 0 0 / 2px 2px;
  fill: var(--shade);
}
.flags { display: grid; grid-template-columns: 117px 13px; row-gap: 6px; margin: 1px 7px 0 10px; align-items: center; }

.dose { display: flex; flex: 1; flex-direction: column; min-height: 0; background: var(--light); }
.dose-head { display: flex; flex: none; align-items: center; height: 27px; padding-left: 6px; border-bottom: 1px solid var(--shade); box-shadow: 0 1px #fff; }
.dose-head h3 { width: 197px; color: #008000; font-weight: bold; font-size: 12px; }
.dose-head .sep { margin: 0 6px 0 15px; }
.dose-head .schema { gap: 7px; margin-left: 7px; }
.dose-head .schema + .sep { margin-left: 6px; }
.dose-main { display: flex; flex: 1; min-height: 0; padding: 4px 6px 0; }
.dose-list { flex: none; width: 64%; background: var(--light); }
.doses { table-layout: fixed; width: 260px; border-collapse: separate; border-spacing: 0; }
.doses th, .doses td { height: 20px; padding: 0 4px; border-right: 1px solid var(--shade); border-bottom: 1px solid var(--shade); font-weight: normal; text-align: left; }
.doses th { width: 200px; }
.doses .time { background: var(--sky); }
.doses .focus { background: #fff; box-shadow: inset 0 0 0 1px #000; }
.doses .sum { background: #ffffdc; }
.every { display: flex; flex: none; height: 21px; align-items: center; padding-left: 34px; }
.every label { width: 46px; }
.spin { display: flex; width: 44px; height: 21px; margin-right: 6px; }
.spin input { flex: 1; min-width: 0; padding: 0 1px; text-align: right; }
.spin-btns { display: flex; flex-direction: column; width: 16px; }
.spin-btns button { flex: 1; min-height: 0; }
.spin-btns svg { width: 5px; height: 3px; }

.dose-foot { display: flex; flex: none; padding: 5px 7px 6px; gap: 8px; }
.foot-left { display: flex; flex: none; width: 390px; flex-direction: column; gap: 8px; }
.orderer { display: grid; grid-template-columns: 85px 1fr; align-content: start; align-items: center; height: 71px; padding: 6px; row-gap: 9px; }
.names { display: flex; gap: 1px; }
.w-code { width: 53px; }
.w-name { width: 154px; }
.max-row { display: flex; align-items: flex-start; height: 27px; gap: 29px; }
.opts { display: grid; grid-template-columns: 112px 13px; row-gap: 1px; align-items: center; }
.infusion { display: flex; align-items: flex-start; height: 71px; padding: 7px 6px; }
.infusion label { width: 85px; padding-top: 4px; }
.infusion span { width: 19px; padding-top: 4px; margin: 0 1px 0 4px; }
.w-tiny { width: 21px; }

fieldset { min-width: 0; margin: 0; border: 1px solid var(--shade); box-shadow: inset 1px 1px #fff, 1px 1px #fff; }
legend { padding: 0 6px 0 1px; background: var(--face); }
.advice { flex: 1; padding: 5px 10px 11px; margin-top: -1px; }
.advice legend { background: var(--light); }
.advice-text { display: block; height: 95px; margin-top: 6px; padding: 3px 6px; font-weight: bold; font-size: 12px; }

.periods { display: grid; flex: none; grid-template-columns: 288px 1fr 288px; gap: 4px; }
.period {
  display: grid;
  grid-template-columns: 93px 1fr;
  align-content: start;
  align-items: center;
  height: 97px;
  padding: 5px 13px 7px 6px;
  row-gap: 3px;
}
.period legend { margin-left: 3px; }
.period-mid { grid-template-columns: 46px 1fr; row-gap: 5px; }
.date-row { display: flex; align-items: center; justify-content: space-between; }
.date-row label { margin-left: auto; margin-right: 5px; }
.w-date { width: 83px; }
.w-time { width: 63px; }
.w-sign { width: 118px; }

.info { flex: none; width: 201px; padding: 1px; border: 1px solid var(--shade); box-shadow: inset 1px 1px #fff, 1px 1px #fff; background: var(--sky); }
.info h4 { height: 16px; padding: 1px 3px; background: var(--bar); }
.info .dim { color: var(--shade); }
.g32 { height: 32px; }
.g54 { height: 54px; }
.g53 { height: 53px; }
.g48 { height: 48px; }
.measures { display: grid; grid-template-columns: 53px 1fr 65px; height: 77px; padding: 3px 0 0 6px; row-gap: 5px; align-content: start; }
.flagged { position: relative; }
.flagged svg { position: absolute; top: -3px; right: 4px; width: 6px; height: 6px; }
.measures a {
  grid-column: 1 / -1;
  justify-self: start;
  margin-top: 12px;
  color: #00f;
  font: 10px/14px "DejaVu Sans", sans-serif;
  text-decoration: underline;
}
```
